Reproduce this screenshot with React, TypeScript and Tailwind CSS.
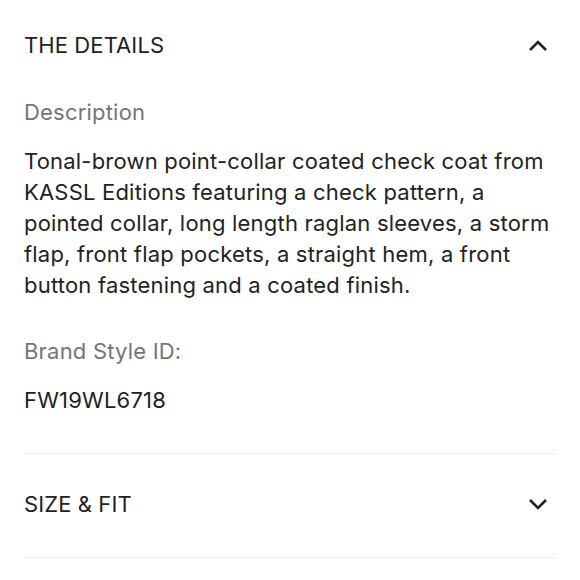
const font = { fontFamily: 'Inter, "Liberation Sans", Arial, sans-serif' };

function Chevron({ up }: { up: boolean }) {
  return (
    <svg width="20" height="13" viewBox="0 0 20 13" fill="none" className="mr-[8px] shrink-0">
      <polyline
        points={up ? '2,11 10,3 18,11' : '2,2 10,10 18,2'}
        stroke="#222222"
        strokeWidth="2.6"
        strokeLinejoin="miter"
      />
    </svg>
  );
}

function SectionHeader({ title, open, className }: { title: string; open: boolean; className: string }) {
  return (
    <button className={`flex w-full items-center justify-between text-left ${className}`}>
      <span className="text-[22px] leading-[31px] tracking-[0.1px] text-[#222222]">{title}</span>
      <Chevron up={open} />
    </button>
  );
}

export default function App() {
  return (
    <div className="min-h-[580px] w-[580px] bg-white px-6" style={font}>
      <section className="border-b border-[#eeeeee]">
        <SectionHeader title="THE DETAILS" open className="pt-[30px]" />
        <div className="pb-[37px] text-[22px] leading-[31px] tracking-[0.2px]">
          <p className="mt-[36px] text-[#757575]">Description</p>
          <p className="mt-[18px] text-[#222222]">
            Tonal-brown point-collar coated check coat from KASSL Editions featuring a check
            pattern, a pointed collar, long length raglan sleeves, a storm flap, front flap
            pockets, a straight hem, a front button fastening and a coated finish.
          </p>
          <p className="mt-[35px] text-[#757575]">Brand Style ID:</p>
          <p className="mt-[18px] text-[#222222]">FW19WL6718</p>
        </div>
      </section>
      <section className="border-b border-[#eeeeee]">
        <SectionHeader title="SIZE & FIT" open={false} className="pt-[35px] pb-[37px]" />
      </section>
    </div>
  );
}
